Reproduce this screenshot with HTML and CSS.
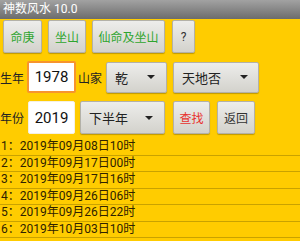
FILE: index.html
```html
<!DOCTYPE html>
<html lang="zh">
<head>
    <meta charset="UTF-8">
    <meta name="viewport" content="width=device-width, initial-scale=1.0">
    <title>神数风水 10.0</title>
    <link rel="stylesheet" href="styles.css">
</head>
<body>

    <!-- Title Bar -->
    <div class="titlebar">神数风水 10.0</div>

    <!-- Top Buttons -->
    <div class="toolbar">
        <button class="btn btn-green">命庚</button>
        <button class="btn btn-green">坐山</button>
        <button class="btn btn-green">仙命及坐山</button>
        <button class="btn btn-help">?</button>
    </div>

    <!-- Birth Year Row -->
    <div class="form-row row-birth">
        <span class="label">生年</span>
        <input type="text" class="year-input focused" value="1978">
        <span class="label label-shan">山家</span>
        <div class="picker picker-gua">
            <span>乾</span>
            <svg class="arrow" width="8" height="4" viewBox="0 0 8 4"><path d="M0 0 L8 0 L4 4 Z" fill="#222"/></svg>
        </div>
        <div class="picker picker-hex">
            <span>天地否</span>
            <svg class="arrow" width="8" height="4" viewBox="0 0 8 4"><path d="M0 0 L8 0 L4 4 Z" fill="#222"/></svg>
        </div>
    </div>

    <!-- Year Row -->
    <div class="form-row row-year">
        <span class="label">年份</span>
        <input type="text" class="year-input" value="2019">
        <div class="picker picker-half">
            <span>下半年</span>
            <svg class="arrow" width="8" height="4" viewBox="0 0 8 4"><path d="M0 0 L8 0 L4 4 Z" fill="#222"/></svg>
        </div>
        <button class="btn btn-red">查找</button>
        <button class="btn btn-back">返回</button>
    </div>

    <!-- Results -->
    <ul class="result-list">
        <li>1：2019年09月08日10时</li>
        <li>2：2019年09月17日00时</li>
        <li>3：2019年09月17日16时</li>
        <li>4：2019年09月26日06时</li>
        <li>5：2019年09月26日22时</li>
        <li>6：2019年10月03日10时</li>
    </ul>

</body>
</html>
```

FILE: styles.css
```css
body {
    margin: 0;
    padding: 0;
    background-color: #ffcc00;
    font-family: Roboto, "Noto Sans CJK SC", sans-serif;
    color: #222;
    overflow: hidden;
}
.titlebar {
    height: 19px;
    line-height: 19px;
    padding-left: 3px;
    font-size: 12px;
    color: #fff;
    background: linear-gradient(#a2a2a2, #6c6c6c);
}
.toolbar {
    display: flex;
    padding: 1px 0 0 3px;
}
.btn {
    box-sizing: border-box;
    height: 33px;
    padding: 0;
    white-space: nowrap;
    font-family: Roboto, "Noto Sans CJK SC", sans-serif;
    font-size: 12px;
    color: #333;
    background: linear-gradient(#ededeb, #d3d2cc);
    border: 1px solid #b3b1a8;
    border-radius: 2px;
    box-shadow: 0 1px 1px rgba(0, 0, 0, 0.25);
}
.btn-green {
    color: #2ea52e;
    margin-right: 6px;
}
.toolbar .btn:nth-child(1) {
    width: 39px;
}
.toolbar .btn:nth-child(2) {
    width: 38px;
}
.toolbar .btn:nth-child(3) {
    width: 73px;
    margin-right: 7px;
}
.btn-help {
    width: 23px;
}
.form-row {
    display: flex;
    align-items: center;
}
.row-birth {
    margin-top: 8px;
    height: 32px;
}
.row-year {
    margin-top: 8px;
    height: 33px;
}
.label {
    width: 24px;
    font-size: 12px;
    color: #222;
    white-space: nowrap;
}
.year-input {
    box-sizing: border-box;
    height: 32px;
    width: 49px;
    margin-left: 3px;
    padding: 0;
    text-align: center;
    font-family: Roboto, sans-serif;
    font-size: 15px;
    color: #111;
    background-color: #fff;
    border: 1px solid #f4f0e4;
    border-radius: 2px;
    outline: none;
}
.year-input.focused {
    border: 2px solid #f7942d;
}
.row-year .year-input {
    width: 47px;
    height: 33px;
    margin-left: 4px;
}
.label-shan {
    margin-left: 2px;
}
.picker {
    box-sizing: border-box;
    display: flex;
    align-items: center;
    justify-content: space-between;
    height: 31px;
    padding: 0 11px 0 8px;
    font-size: 13px;
    color: #222;
    background: linear-gradient(#ededeb, #d3d2cc);
    border: 1px solid #b3b1a8;
    border-radius: 2px;
    box-shadow: 0 1px 1px rgba(0, 0, 0, 0.25);
}
.picker-gua {
    width: 61px;
    margin-left: 4px;
}
.picker-hex {
    width: 86px;
    margin-left: 6px;
    padding-right: 10px;
}
.picker-half {
    width: 85px;
    height: 33px;
    margin-left: 5px;
    padding-right: 11px;
}
.btn-red {
    width: 37px;
    margin-left: 8px;
    color: #e8322e;
}
.btn-back {
    width: 38px;
    margin-left: 7px;
}
.result-list {
    list-style-type: none;
    margin: 5px 0 0 0;
    padding: 0;
}
.result-list li {
    height: 15.5px;
    line-height: 15.5px;
    padding-left: 1px;
    font-size: 12px;
    color: #2e2200;
    border-bottom: 1px solid #c9a200;
}
```
